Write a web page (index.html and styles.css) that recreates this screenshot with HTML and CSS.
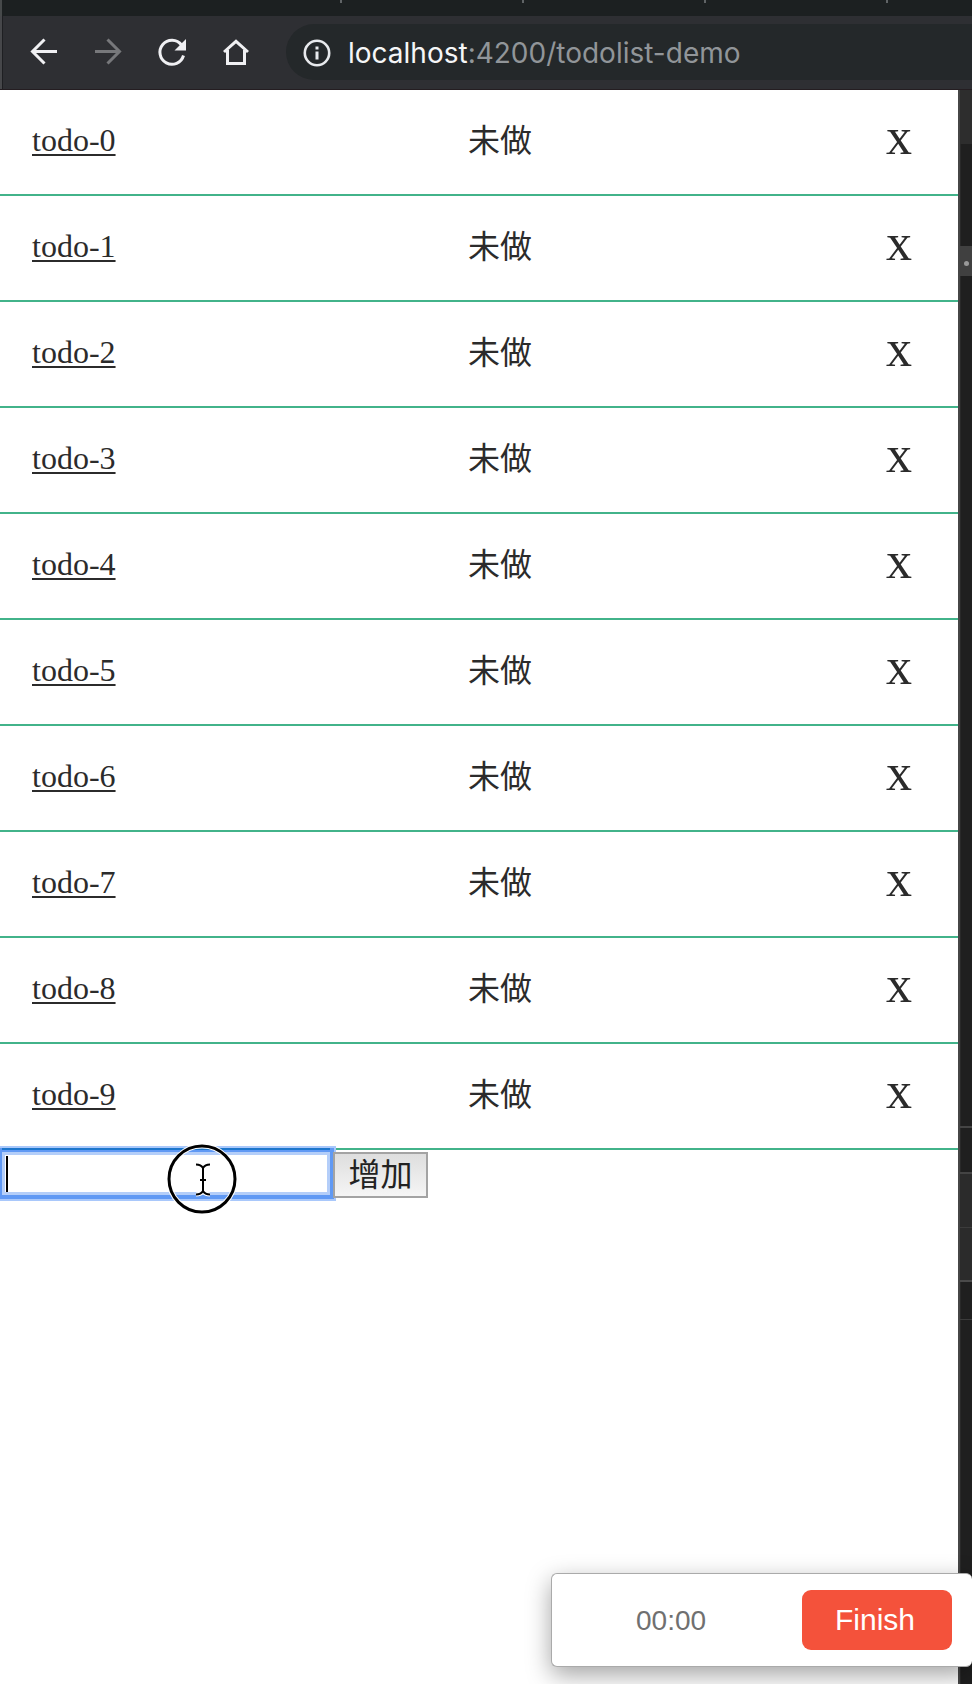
FILE: index.html
```html
<!DOCTYPE html>
<html lang="zh">
<head>
<meta charset="utf-8">
<title>todolist-demo</title>
<link rel="stylesheet" href="styles.css">
</head>
<body>
<div class="tabs"><i></i><i></i><i></i><i></i></div>
<header class="toolbar">
  <svg class="nav" width="280" height="74" viewBox="0 0 280 74" fill="none" stroke="#f0f0f3" stroke-width="3">
    <path d="M57 35.500H33M44.500 23.500L32.500 35.500L44.500 47.500"/>
    <path stroke="#77787b" d="M95 35.500H119M107.500 23.500L119.500 35.500L107.500 47.500"/>
    <path d="M181.500 29A12 12 0 1 0 183.500 39.500"/>
    <path fill="#f0f0f3" stroke="none" d="M186 23V34.500H174.500Z"/>
    <path d="M224 36L236 25.300L248 36M227.500 34V47.500H244.500V34"/>
  </svg>
  <div class="address">
    <svg width="28" height="28" viewBox="0 0 28 28" fill="none" stroke="#e8eaed" stroke-width="2.600"><circle cx="14" cy="14" r="12.200"/><path stroke-width="3" d="M14 12.500V20.500M14 7.500V10.500"/></svg>
    <span class="url"><b>localhost</b>:4200/todolist-demo</span>
  </div>
</header>
<div class="content">
  <main class="page">
    <ul class="list">
      <li><a>todo-0</a><span class="state">未做</span><span class="del">x</span></li>
      <li><a>todo-1</a><span class="state">未做</span><span class="del">x</span></li>
      <li><a>todo-2</a><span class="state">未做</span><span class="del">x</span></li>
      <li><a>todo-3</a><span class="state">未做</span><span class="del">x</span></li>
      <li><a>todo-4</a><span class="state">未做</span><span class="del">x</span></li>
      <li><a>todo-5</a><span class="state">未做</span><span class="del">x</span></li>
      <li><a>todo-6</a><span class="state">未做</span><span class="del">x</span></li>
      <li><a>todo-7</a><span class="state">未做</span><span class="del">x</span></li>
      <li><a>todo-8</a><span class="state">未做</span><span class="del">x</span></li>
      <li><a>todo-9</a><span class="state">未做</span><span class="del">x</span></li>
    </ul>
    <div class="form">
      <div class="field"><i class="caret"></i></div>
      <button class="add">增加</button>
      <svg class="pointer" width="72" height="72" viewBox="0 0 72 72" fill="none">
        <circle cx="36" cy="36" r="33" stroke="#fff" stroke-width="5"/>
        <circle cx="36" cy="36" r="33" stroke="#000" stroke-width="3"/>
        <path stroke="#fff" stroke-width="4" d="M30 21.500Q35 21.500 37 25Q39 21.500 44 21.500M37 25V48M30 51.500Q35 51.500 37 48Q39 51.500 44 51.500M34 37H40"/>
        <path stroke="#000" stroke-width="2" d="M30 21.500Q35 21.500 37 25Q39 21.500 44 21.500M37 25V48M30 51.500Q35 51.500 37 48Q39 51.500 44 51.500M34 37H40"/>
      </svg>
    </div>
  </main>
  <aside class="side">
    <div class="s1"></div><div class="s2"></div><div class="s3"><i></i></div><div class="s4"></div>
    <div class="s5"></div><div class="s6"></div><div class="s7"></div><div class="s8"></div>
  </aside>
</div>
<div class="recorder"><span class="time">00:00</span><button class="finish">Finish</button></div>
</body>
</html>
```
FILE: styles.css
```css
* { box-sizing: border-box; }
body { margin: 0; width: 972px; height: 1684px; overflow: hidden; position: relative; background: #fff; font-family: "Liberation Serif", "Noto Sans CJK SC", serif; color: #2b2b2b; }
i { display: block; }
.tabs { height: 16px; background: #1c2021; display: flex; gap: 180px; padding-left: 338px; border-left: 2px solid #46494a; }
.tabs i { width: 2px; height: 3px; background: #606466; flex: none; }
.toolbar { height: 74px; background: #2e2f33; border-bottom: 1px solid #241d21; display: flex; overflow: hidden; box-shadow: inset 2px 0 #46474a, inset 3px 0 #1e1f22; }
.nav { flex: none; }
.address { flex: none; margin: 8px 0 0 6px; width: 720px; height: 56px; border-radius: 28px; background: #24282a; display: flex; align-items: center; padding-left: 17px; gap: 17px; }
.address svg { margin-top: 1px; }
.url { font: 28px Inter, sans-serif; color: #919599; white-space: nowrap; padding-top: 1px; }
.url b { color: #f5f6f7; font-weight: 400; }
.content { display: flex; height: 1594px; }
.page { width: 958px; }
.list { list-style: none; margin: 0; padding: 0; }
.list li { height: 106px; border-bottom: 2px solid #42b38a; display: flex; align-items: center; justify-content: space-between; padding: 0 46px 4px 32px; font-size: 32px; line-height: 37px; }
.list a { width: 436px; text-decoration: underline; text-decoration-thickness: 2px; text-underline-offset: 3px; }
.state { flex: 1; padding-top: 2px; }
.del { font-size: 52px; line-height: 60px; padding-bottom: 6px; }
.form { display: flex; position: relative; padding-top: 2px; }
.field { position: relative; width: 328px; height: 43px; margin: 0 3px 0 2px; padding: 4px 0 0 4px; background: #fff; box-shadow: inset 0 0 0 3px #b4cef9, 0 0 0 4px #6099f4, 0 0 0 6px #a9c8fb; }
.field::before { content: ""; position: absolute; left: 0; right: 0; top: -4px; height: 2px; background: #1c76cc; }
.caret { width: 2px; height: 36px; background: #000; }
.add { position: relative; width: 95px; height: 46px; padding: 0 0 6px; border: 2px solid #a3a3a3; background: linear-gradient(#dedede, #f5f5f5); font: 32px/36px "Noto Sans CJK SC", sans-serif; color: #222; }
.pointer { position: absolute; left: 166px; top: -7px; }
.side { width: 14px; background: #1f1f1f; border-left: 2px solid #464646; box-shadow: inset 1px 0 #292929; }
.s1 { height: 54px; background: #2d2d2d; }
.s2 { height: 102px; }
.s3 { height: 30px; background: #404040; padding: 15px 0 0 4px; }
.s3 i { width: 5px; height: 5px; border-radius: 50%; background: #999; }
.s4 { height: 852px; border-bottom: 2px solid #444; }
.s5 { height: 46px; border-bottom: 2px solid #444; }
.s6 { height: 54px; background: #2b2b2b; border-bottom: 1px solid #3c3c3c; }
.s7 { height: 54px; background: #2b2b2b; border-bottom: 2px solid #4a4a4a; }
.s8 { height: 38px; border-bottom: 1px solid #3b3b3b; }
.recorder { position: absolute; left: 551px; top: 1573px; width: 421px; height: 94px; border: 1px solid #aaa; border-right: 0; border-radius: 6px; background: #fff; box-shadow: 0 8px 24px rgba(0,0,0,.36); display: flex; align-items: center; justify-content: space-between; padding: 0 20px 0 84px; font-family: "Liberation Sans", sans-serif; }
.time { font-size: 28px; color: #707070; padding-top: 2px; }
.finish { width: 150px; height: 60px; padding: 0 4px 0 0; border: 0; border-radius: 9px; background: #f4523b; color: #fff; font: 30px "Liberation Sans", sans-serif; }
```
